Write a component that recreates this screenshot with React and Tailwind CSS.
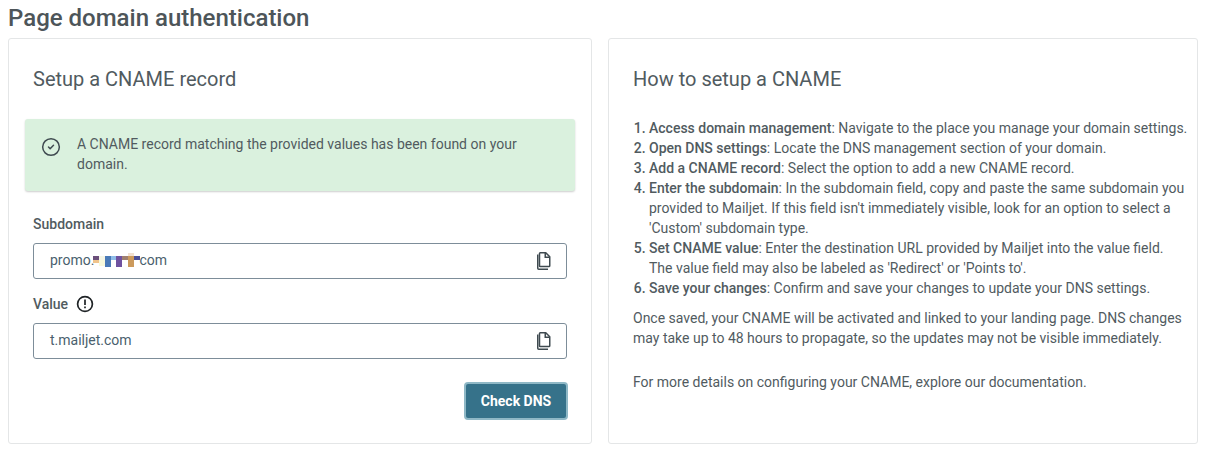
import { CircleCheck } from 'lucide-react'

const font = { fontFamily: 'Roboto, sans-serif' }

function CopyIcon() {
  return (
    <svg width="24" height="24" viewBox="0 0 24 24" fill="none" stroke="#3f4a50" strokeWidth="1.5" className="shrink-0">
      <path d="M6.75 5.5v13.75a1 1 0 0 0 1 1H17" />
      <path d="M9.25 3.75h5.5l4 4v9a.75.75 0 0 1-.75.75H9.25a.75.75 0 0 1-.75-.75v-12.25a.75.75 0 0 1 .75-.75z" />
      <path d="M14.25 3.75v4.5h4.5" />
    </svg>
  )
}

// pixelated part of the subdomain
function Blur() {
  const cells = [
    [0, 0, 6, 4, '#6b4f7a'], [0, 4, 6, 3, '#f0c48c'],
    [6, 0, 6, 4, '#f5f5e6'], [6, 4, 6, 6, '#f8f9dc'],
    [12, 0, 6, 11, '#4a7ab8'], [18, 0, 5, 4, '#8fbde8'],
    [23, 0, 6, 11, '#6f52a0'], [29, 0, 6, 4, '#a08070'],
    [35, 0, 6, 11, '#cc9a5c'], [41, 0, 6, 4, '#4a4f98'],
  ]
  return (
    <svg width="47" height="14" viewBox="0 -3 47 14" className="-mx-px inline-block shrink-0">
      <rect x="35" y="-3" width="6" height="3" fill="#f2e0d0" />
      {cells.map(([x, y, w, h, c], i) => (
        <rect key={i} x={x} y={y} width={w} height={h} fill={c} />
      ))}
    </svg>
  )
}

function Field({ children }) {
  return (
    <div className="flex h-9 items-center justify-between rounded-[3px] border border-[#7d8d99] bg-white pl-4 pr-[11px] text-sm text-[#4a5f6e]">
      <div className="-mt-0.5 flex items-center">{children}</div>
      <CopyIcon />
    </div>
  )
}

const steps = [
  ['Access domain management', ': Navigate to the place you manage your domain settings.'],
  ['Open DNS settings', ': Locate the DNS management section of your domain.'],
  ['Add a CNAME record', ': Select the option to add a new CNAME record.'],
  ['Enter the subdomain', ": In the subdomain field, copy and paste the same subdomain you provided to Mailjet. If this field isn't immediately visible, look for an option to select a 'Custom' subdomain type."],
  ['Set CNAME value', ": Enter the destination URL provided by Mailjet into the value field. The value field may also be labeled as 'Redirect' or 'Points to'."],
  ['Save your changes', ': Confirm and save your changes to update your DNS settings.'],
]

export default function App() {
  return (
    <div className="h-[451px] w-[1206px] overflow-hidden bg-white text-[#515b5f]" style={font}>
      <h1 className="h-[38px] pl-2 pt-[3px] text-2xl font-medium leading-[30px] text-[#4d5559]">Page domain authentication</h1>
      <div className="flex gap-4 pl-2">
        {/* Left card */}
        <div className="h-[406px] w-[584px] rounded-[3px] border border-[#e4e6e7] px-4 pt-[26px]">
          <h2 className="pl-2 text-xl font-normal leading-7">Setup a CNAME record</h2>
          <div className="mt-[26px] flex h-[72px] rounded-[3px] bg-[#daf1de] pl-[16px] pr-4 pt-[15px] text-sm leading-5 shadow-[0_1px_2px_rgba(0,0,0,0.2)]">
            <CircleCheck size={20} strokeWidth={1.8} className="mt-[3px] shrink-0 text-[#3f4a50]" />
            <p className="ml-4">A CNAME record matching the provided values has been found on your domain.</p>
          </div>
          <div className="px-2">
            <label className="mt-[23px] block text-sm font-medium leading-5">Subdomain</label>
            <div className="mt-[9px]">
              <Field>
                promo.<Blur />com
              </Field>
            </div>
            <div className="mt-[15px] flex h-5 items-center gap-[7px] text-sm font-medium">
              Value
              <svg width="20" height="20" viewBox="0 0 20 20" fill="none" stroke="#1f2326" strokeWidth="1.7">
                <circle cx="10" cy="10" r="7.4" />
                <path d="M10 5.6v5.4M10 12.6v1.6" />
              </svg>
            </div>
            <div className="mt-[9px]">
              <Field>t.mailjet.com</Field>
            </div>
            <div className="mt-[23px] flex justify-end">
              <button className="-mr-px h-[38px] w-[104px] rounded-[4px] border-2 border-[#8fb8c6] bg-[#36728a] text-sm font-bold text-white">Check DNS</button>
            </div>
          </div>
        </div>
        {/* Right card */}
        <div className="h-[406px] w-[590px] rounded-[3px] border border-[#e4e6e7] pl-6 pr-2 pt-[26px]">
          <h2 className="text-xl font-normal leading-7">How to setup a CNAME</h2>
          <ol className="mt-[25px] list-decimal pl-4 text-sm leading-5 marker:font-medium">
            {steps.map(([title, rest]) => (
              <li key={title}>
                <strong className="font-medium">{title}</strong>
                {rest}
              </li>
            ))}
          </ol>
          <p className="mt-[10px] text-sm leading-5">
            Once saved, your CNAME will be activated and linked to your landing page. DNS changes may take up to 48 hours to propagate, so the updates may not be visible immediately.
          </p>
          <p className="mt-6 text-sm leading-5">For more details on configuring your CNAME, explore our documentation.</p>
        </div>
      </div>
    </div>
  )
}
